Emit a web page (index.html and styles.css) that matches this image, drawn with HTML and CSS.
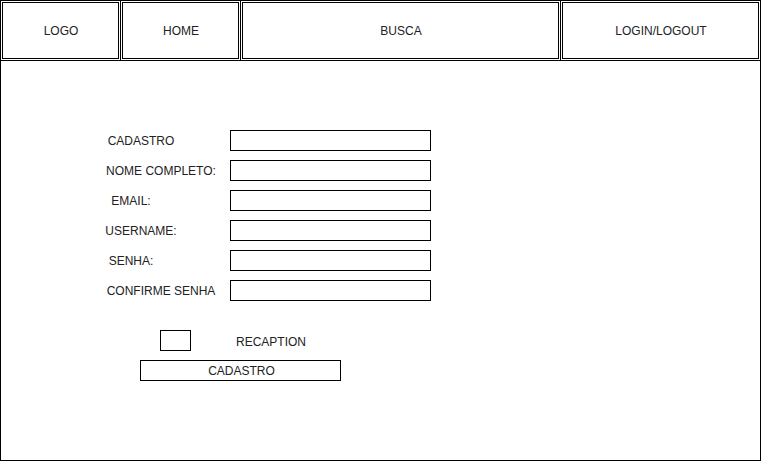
FILE: index.html
```html
<!DOCTYPE html>
<html lang="pt-BR">
<head>
<meta charset="utf-8">
<meta name="viewport" content="width=device-width, initial-scale=1">
<title>Cadastro</title>
<link rel="stylesheet" href="styles.css">
</head>
<body>
<div class="page">
  <nav class="nav">
    <a class="nav-item" href="#">LOGO</a>
    <a class="nav-item" href="#">HOME</a>
    <a class="nav-item" href="#">BUSCA</a>
    <a class="nav-item" href="#">LOGIN/LOGOUT</a>
  </nav>
  <main class="content">
    <form class="form">
      <div class="row">
        <label class="label medium" for="cadastro">CADASTRO</label>
        <input class="field" id="cadastro" type="text">
      </div>
      <div class="row">
        <label class="label long" for="nome">NOME COMPLETO:</label>
        <input class="field" id="nome" type="text">
      </div>
      <div class="row">
        <label class="label short" for="email">EMAIL:</label>
        <input class="field" id="email" type="email">
      </div>
      <div class="row">
        <label class="label medium" for="username">USERNAME:</label>
        <input class="field" id="username" type="text">
      </div>
      <div class="row">
        <label class="label short" for="senha">SENHA:</label>
        <input class="field" id="senha" type="password">
      </div>
      <div class="row">
        <label class="label long" for="confirme">CONFIRME SENHA</label>
        <input class="field" id="confirme" type="password">
      </div>
      <div class="check-row">
        <input class="check" id="recaption" type="checkbox">
        <label for="recaption">RECAPTION</label>
      </div>
      <button class="submit" type="submit">CADASTRO</button>
    </form>
  </main>
</div>
</body>
</html>
```
FILE: styles.css
```css
* {
  box-sizing: border-box;
}

body {
  margin: 0;
  background: #fff;
  color: #222;
  font: 12px/23px "Liberation Sans", Arial, sans-serif;
}

.page {
  min-height: 100vh;
  border: 1px solid #000;
}

/* Neighbouring cells share one outer line. */
.nav {
  display: grid;
  grid-template-columns: 6fr 6fr 16fr 10fr;
  margin: -1px;
  padding-right: 1px;
}

.nav-item {
  display: flex;
  align-items: center;
  justify-content: center;
  height: 61px;
  margin-right: -1px;
  padding: 2px 0 0 1px;
  border: 3px double #000;
  color: inherit;
  text-decoration: none;
}

.content {
  padding: 70px 100px;
}

.form {
  display: flex;
  flex-direction: column;
  align-items: flex-start;
  gap: 9px;
}

.row {
  display: grid;
  grid-template-columns: 129px 201px;
  height: 21px;
}

.label {
  text-align: center;
  white-space: nowrap;
}

.short {
  width: 60px;
}

.medium {
  width: 80px;
}

.long {
  width: 120px;
}

.field,
.check,
.submit {
  height: 21px;
  margin: 0;
  border: 1px solid #000;
  border-radius: 0;
  background: #fff;
  color: inherit;
  font: inherit;
}

.field {
  width: 100%;
  padding: 0 4px;
}

.check-row {
  display: flex;
  gap: 45px;
  height: 21px;
  margin: 20px 0 0 59px;
  line-height: 25px;
}

.check {
  width: 31px;
  appearance: none;
}

.check:checked {
  background: #000;
}

.submit {
  width: 201px;
  margin-left: 39px;
  padding: 2px 0 0 2px;
  line-height: 17px;
}
```
